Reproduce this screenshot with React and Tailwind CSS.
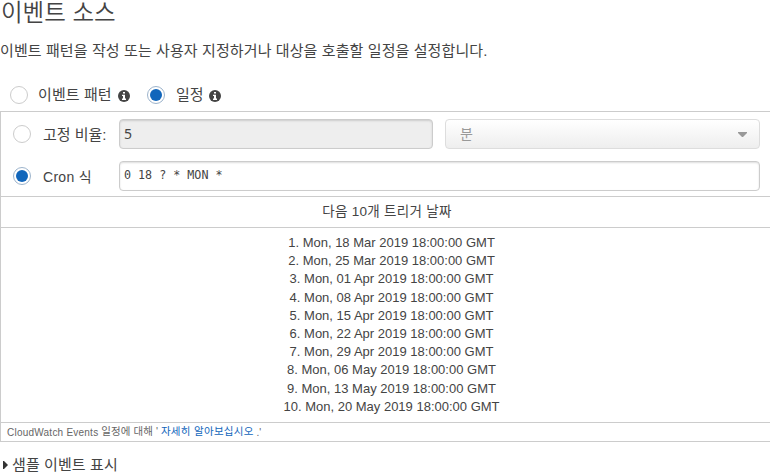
const dates = [
  'Mon, 18 Mar 2019 18:00:00 GMT',
  'Mon, 25 Mar 2019 18:00:00 GMT',
  'Mon, 01 Apr 2019 18:00:00 GMT',
  'Mon, 08 Apr 2019 18:00:00 GMT',
  'Mon, 15 Apr 2019 18:00:00 GMT',
  'Mon, 22 Apr 2019 18:00:00 GMT',
  'Mon, 29 Apr 2019 18:00:00 GMT',
  'Mon, 06 May 2019 18:00:00 GMT',
  'Mon, 13 May 2019 18:00:00 GMT',
  'Mon, 20 May 2019 18:00:00 GMT',
];

function Radio({ checked }) {
  return (
    <span
      className={
        'flex size-[18px] shrink-0 items-center justify-center rounded-full border bg-white ' +
        (checked ? 'border-[#9db4cc]' : 'border-[#ccc]')
      }
    >
      {checked && <span className="size-3 rounded-full bg-[#1166bb]" />}
    </span>
  );
}

function Info() {
  return (
    <svg className="mt-0.5 size-3 shrink-0" viewBox="0 0 12 12">
      <circle cx="6" cy="6" r="6" fill="#444" />
      <path d="M5 2h2v1.6H5zM4 4.8h3v3.7h1v1.4H4V8.5h1V6.1H4z" fill="#fff" />
    </svg>
  );
}

export default function App() {
  return (
    <div className="flex h-[475px] w-[770px] flex-col overflow-hidden bg-white font-['Liberation_Sans','Noto_Sans_CJK_KR',sans-serif] text-[15px] whitespace-nowrap text-[#444]">
      <h1 className="h-[38px] shrink-0 pl-px text-[23.5px] leading-[27px] font-[350]">이벤트 소스</h1>
      <p className="h-[46px] shrink-0 leading-[25px] tracking-[0.1px]">이벤트 패턴을 작성 또는 사용자 지정하거나 대상을 호출할 일정을 설정합니다.</p>
      <div className="flex h-[27px] shrink-0 items-center pb-[5px] pl-2.5">
        <Radio />
        <span className="ml-2.5 w-20 tracking-[0.1px]">이벤트 패턴</span>
        <Info />
        <span className="ml-[17px]"><Radio checked /></span>
        <span className="ml-[11px] w-[33px]">일정</span>
        <Info />
      </div>

      <section className="flex h-[331px] shrink-0 flex-col border-y border-l border-[#ccc]">
        <div className="h-[85px] border-b border-[#ccc] pl-3">
          <div className="flex h-[44px] items-center">
            <Radio />
            <span className="ml-3 w-[76px] pt-0.5">고정 비율:</span>
            <div className="flex h-[30px] w-[314px] items-center rounded-[4px] border border-[#ccc] bg-[#eee] px-1 font-['Noto_Sans',sans-serif] text-sm shadow-[inset_0_1px_2px_#ccc]">5</div>
            <div className="ml-3 flex h-[30px] w-[315px] items-center justify-between rounded-[4px] border border-[#ddd] bg-linear-to-b from-white to-[#eee] pr-3 pl-[14px] text-sm text-[#999]">
              <span>분</span>
              <svg className="h-[5px] w-[9px]" viewBox="0 0 9 5"><path d="M0 0h9v1L5 5H4L0 1z" fill="#999" /></svg>
            </div>
          </div>
          <div className="flex h-[40px] items-center">
            <Radio checked />
            <span className="ml-3 w-[76px] pt-0.5 text-sm tracking-[0.3px]">Cron 식</span>
            <div className="flex h-[30px] w-[641px] items-center rounded-[4px] border border-[#ccc] bg-white px-1 font-['DejaVu_Sans_Mono',monospace] text-[11.7px] shadow-[inset_0_1px_2px_#ddd]">0 18 ? * MON *</div>
          </div>
        </div>
        <div className="flex h-[31px] items-center justify-center border-b border-[#ccc] pl-[3px] text-[13.5px] tracking-[0.3px]">다음 10개 트리거 날짜</div>
        <ol className="h-[195px] border-b border-[#ccc] pt-[6px] pl-3 text-center text-[13px] leading-[18.2px]">
          {dates.map((date, i) => (
            <li key={date}>{i + 1}. {date}</li>
          ))}
        </ol>
        <div className="flex h-[18px] items-center pl-1.5 text-[10px] text-[#666]">
          <span className="tracking-[0.23px]">CloudWatch Events</span>&nbsp;
          <span className="text-[10.5px] tracking-[0.1px]">일정에 대해 '</span>&nbsp;
          <a className="text-[10.5px] tracking-[0.3px] text-[#1166bb]">자세히 알아보십시오</a>&nbsp;.'
        </div>
      </section>

      <div className="mt-[10px] flex h-[26px] shrink-0 items-center pl-[3px]">
        <svg className="h-2 w-[5px]" viewBox="0 0 5 8"><path d="M0 0h1l4 4-4 4H0z" fill="#333" /></svg>
        <span className="ml-1 tracking-[0.1px]">샘플 이벤트 표시</span>
      </div>
    </div>
  );
}
